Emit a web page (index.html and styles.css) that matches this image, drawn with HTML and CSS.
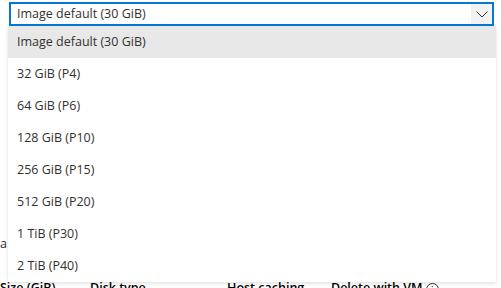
FILE: index.html
```html
<!DOCTYPE html>
<html lang="en">

<head>
    <meta charset="UTF-8">
    <title>OS disk size</title>
    <link rel="stylesheet" href="styles.css">
</head>

<body>
    <div class="page">
        <div class="select">
            <span class="select-value">Image default (30 GiB)</span>
            <span class="select-caret">
                <svg width="12" height="7" viewBox="0 0 12 7">
                    <path d="M0.5 0.5 L6 6 L11.5 0.5" fill="none" stroke="#323130" stroke-width="1"/>
                </svg>
            </span>
        </div>

        <div class="behind">
            <p class="behind-line">a c</p>
            <div class="disk-head">
                <span class="col col-size">Size (GiB)</span>
                <span class="col col-type">Disk type</span>
                <span class="col col-cache">Host caching</span>
                <span class="col col-delete">Delete with VM <i class="info">i</i></span>
            </div>
        </div>

        <!-- dropdown list over the page -->
        <ul class="options">
            <li class="option selected">Image default (30 GiB)</li>
            <li class="option">32 GiB (P4)</li>
            <li class="option">64 GiB (P6)</li>
            <li class="option">128 GiB (P10)</li>
            <li class="option">256 GiB (P15)</li>
            <li class="option">512 GiB (P20)</li>
            <li class="option">1 TiB (P30)</li>
            <li class="option">2 TiB (P40)</li>
        </ul>
    </div>
</body>

</html>
```

FILE: styles.css
```css
* {
    margin: 0;
    padding: 0;
    box-sizing: border-box;
}

body,
html {
    width: 100%;
    height: 100%;
    overflow: hidden;
    background-color: #fff;
}

body {
    font-family: "Open Sans", "Noto Sans", sans-serif;
    font-size: 12.5px;
    color: #323130;
}

.page {
    position: relative;
    height: 100%;
    overflow: hidden;
}

.select {
    display: flex;
    align-items: center;
    margin: 2px 0 0 9px;
    width: 485px;
    height: 24px;
    border: 2px solid #0078d4;
    background-color: #fff;
}

.select .select-value {
    flex: 1;
    padding-left: 6px;
    line-height: 20px;
}

.select .select-caret {
    display: flex;
    align-items: center;
    justify-content: center;
    width: 21px;
    height: 20px;
    background-color: #f3f2f1;
}

.behind {
    padding-top: 210px;
}

.behind .behind-line {
    line-height: 16px;
}

.behind .disk-head {
    display: flex;
    margin-top: 28px;
    font-weight: 600;
    color: #000;
    line-height: 16px;
}

.disk-head .col-size {
    width: 90px;
}

.disk-head .col-type {
    width: 137px;
}

.disk-head .col-cache {
    width: 104px;
}

.disk-head .info {
    display: inline-block;
    width: 13px;
    height: 13px;
    border: 1px solid #323130;
    border-radius: 50%;
    font-style: normal;
    font-size: 9px;
    text-align: center;
    line-height: 11px;
    vertical-align: -1px;
}

.options {
    position: absolute;
    top: 26px;
    left: 8px;
    width: 488px;
    list-style: none;
    background-color: #fff;
    box-shadow: 0 1.6px 3.6px rgba(0, 0, 0, .13), 0 0.3px 0.9px rgba(0, 0, 0, .11);
}

.options .option {
    height: 32px;
    line-height: 32px;
    padding-left: 9px;
}

.options .selected {
    background-color: #e8e8e8;
}
```
